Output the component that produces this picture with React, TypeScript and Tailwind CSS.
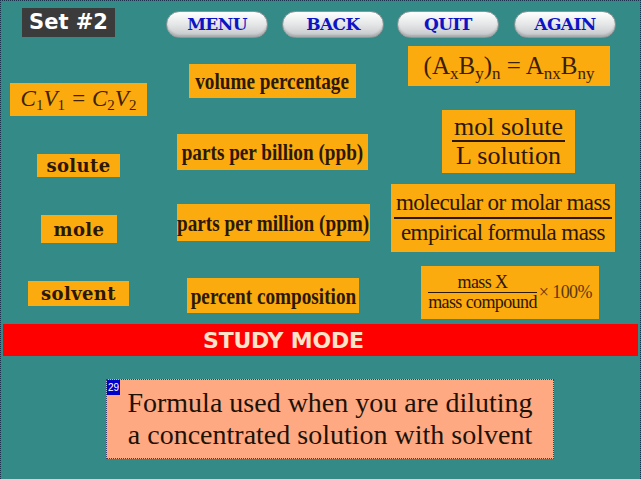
import React from 'react';

const serif = "font-['Liberation_Serif',serif]";
const tile = 'flex items-center justify-center bg-[#fcab0f] text-[#2b1804]';

const NavButton = ({ label, className = '' }: { label: string; className?: string }) => (
  <button
    type="button"
    className={`flex h-[27px] w-[102px] items-center justify-center rounded-full border border-[#8f9496] bg-gradient-to-b from-white via-[#e4e6e7] to-[#c3c6c8] font-['DejaVu_Serif',serif] text-[17px] font-black leading-none tracking-[-0.6px] text-[#0d14c4] shadow-[inset_0_-2px_2px_rgba(0,0,0,0.15)] ${className}`}
  >
    {label}
  </button>
);

// condensed bold label used in the middle column
const Narrow = ({ children }: { children: React.ReactNode }) => (
  <span className="inline-block scale-x-[0.8] whitespace-nowrap">{children}</span>
);

export default function App() {
  return (
    <div className="flex h-[479px] w-[641px] flex-col overflow-hidden border-x border-t border-dotted border-[#17324a] bg-[#338a86]">
      {/* header */}
      <div className="flex h-[40px] items-start">
        <div className="ml-[21px] mt-[7px] flex h-[29px] w-[93px] items-center justify-center bg-[#3a3b3a] font-['DejaVu_Sans',sans-serif] text-[21px] font-bold leading-none text-white">
          Set #2
        </div>
        <NavButton label="MENU" className="ml-[51px] mt-[10px]" />
        <NavButton label="BACK" className="ml-[14px] mt-[10px]" />
        <NavButton label="QUIT" className="ml-[13px] mt-[10px]" />
        <NavButton label="AGAIN" className="ml-[15px] mt-[10px]" />
      </div>

      {/* tiles */}
      <div className="flex h-[283px]">
        <div className="flex w-[169px] flex-col items-start">
          <div className={`${tile} ${serif} ml-[9px] mt-[42px] h-[33px] w-[137px] text-[23px] italic text-[#3f2204]`}>
            <span>
              C<sub className="text-[15px] not-italic">1</sub>V<sub className="text-[15px] not-italic">1</sub> = C
              <sub className="text-[15px] not-italic">2</sub>V<sub className="text-[15px] not-italic">2</sub>
            </span>
          </div>
          <div className={`${tile} ml-[36px] mt-[38px] h-[23px] w-[83px] font-['DejaVu_Serif',serif] text-[18px] font-bold tracking-[0.4px]`}>solute</div>
          <div className={`${tile} ml-[40px] mt-[38px] h-[28px] w-[76px] font-['DejaVu_Serif',serif] text-[18px] font-bold tracking-[0.4px]`}>mole</div>
          <div className={`${tile} ml-[27px] mt-[38px] h-[25px] w-[101px] font-['DejaVu_Serif',serif] text-[18px] font-bold tracking-[0.4px]`}>solvent</div>
        </div>

        <div className="flex w-[216px] flex-col items-start">
          <div className={`${tile} ${serif} ml-[19px] mt-[23px] h-[34px] w-[167px] text-[24px] font-bold`}>
            <Narrow>volume percentage</Narrow>
          </div>
          <div className={`${tile} ${serif} ml-[7px] mt-[36px] h-[36px] w-[191px] text-[24px] font-bold`}>
            <Narrow>parts per billion (ppb)</Narrow>
          </div>
          <div className={`${tile} ${serif} ml-[7px] mt-[34px] h-[37px] w-[193px] text-[24px] font-bold`}>
            <Narrow>parts per million (ppm)</Narrow>
          </div>
          <div className={`${tile} ${serif} ml-[17px] mt-[37px] h-[35px] w-[172px] text-[24px] font-bold`}>
            <Narrow>percent composition</Narrow>
          </div>
        </div>

        <div className="flex flex-1 flex-col items-start">
          <div className={`${tile} ${serif} ml-[22px] mt-[5px] h-[40px] w-[202px] text-[25px] text-[#3a2004]`}>
            <span>
              (A<sub className="text-[17px]">x</sub>B<sub className="text-[17px]">y</sub>)<sub className="text-[17px]">n</sub> = A
              <sub className="text-[17px]">nx</sub>B<sub className="text-[17px]">ny</sub>
            </span>
          </div>
          <div className={`${tile} ${serif} ml-[56px] mt-[24px] h-[63px] w-[133px] flex-col text-[26px] leading-[27px]`}>
            <span className="border-b-2 border-[#2b1804] px-[2px] leading-[26px]">mol solute</span>
            <span>L solution</span>
          </div>
          <div className={`${tile} ${serif} ml-[5px] mt-[11px] h-[68px] w-[224px] flex-col text-[23px] leading-[28px] tracking-[-0.6px]`}>
            <span className="border-b-2 border-[#2b1804] px-[2px]">molecular or molar mass</span>
            <span>empirical formula mass</span>
          </div>
          <div className={`${tile} ${serif} ml-[35px] mt-[14px] h-[53px] w-[178px] text-[18px] tracking-[-0.6px]`}>
            <div className="flex flex-col items-center leading-[19px]">
              <span className="w-full border-b border-[#2b1804] text-center">mass X</span>
              <span>mass compound</span>
            </div>
            <span className="ml-[2px] text-[#5a3a10]">× 100%</span>
          </div>
        </div>
      </div>

      {/* status bar */}
      <div className="mx-[2px] flex h-[32px] items-center bg-[#fe0000] pl-[200px] font-['DejaVu_Sans',sans-serif] text-[22px] font-bold tracking-[-0.2px] text-[#fde3c8]">
        STUDY MODE
      </div>

      {/* clue card */}
      <div className="relative ml-[105px] mt-[23px] flex h-[80px] w-[448px] flex-col items-center justify-center border border-dotted border-[#3c3d6a] bg-[#fea982] font-['Liberation_Serif',serif] text-[28px] leading-[32px] text-[#1d1206]">
        <span className="absolute left-0 top-0 flex h-[15px] w-[13px] items-center justify-center bg-[#0000c8] font-['Liberation_Sans',sans-serif] text-[10px] leading-none text-white">
          29
        </span>
        <span>Formula used when you are diluting</span>
        <span>a concentrated solution with solvent</span>
      </div>
    </div>
  );
}
